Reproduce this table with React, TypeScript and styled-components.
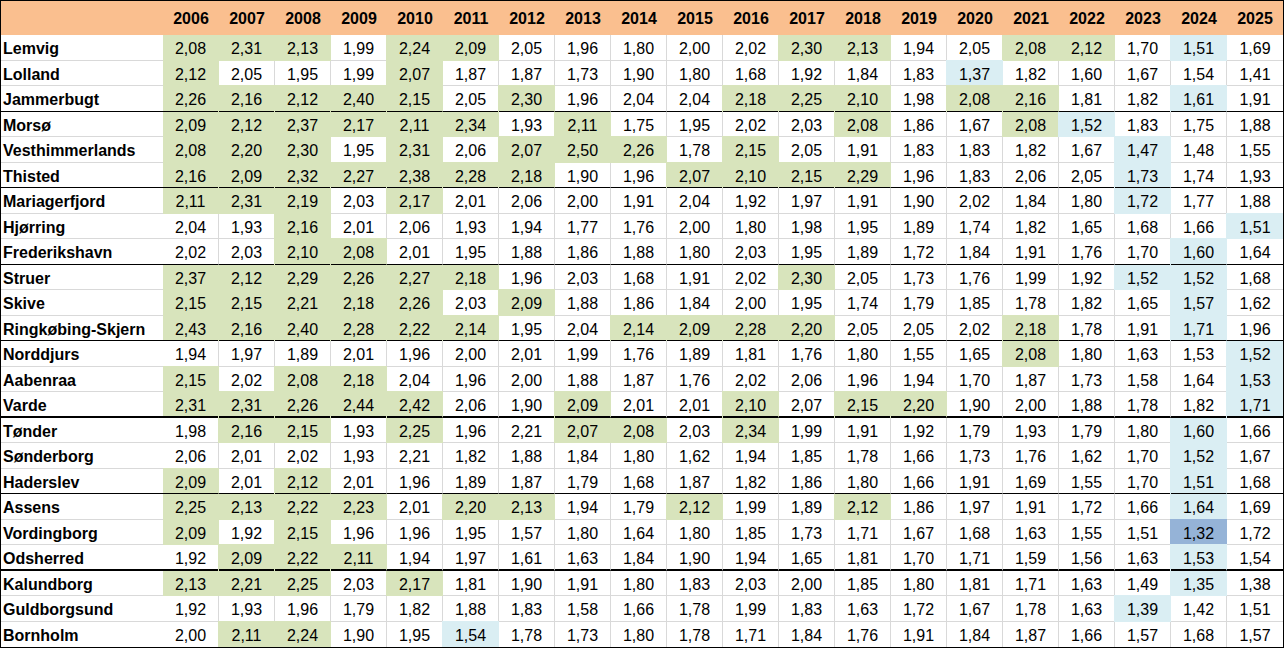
import React from "react";
import styled, { createGlobalStyle, css } from "styled-components";

const GRID = "#d9d9d9";
const FILLS: Record<string, string> = {
  G: "#d8e4bc",
  B: "#daeef3",
  D: "#95b3d7",
};

const GlobalStyle = createGlobalStyle`
  html, body {
    margin: 0;
    padding: 0;
    background: #ffffff;
  }
  body {
    font-family: "Liberation Sans", Arial, sans-serif;
    color: #000000;
  }
`;

const YEARS = Array.from({ length: 20 }, (_, i) => 2006 + i);

type Row = { name: string; values: string };

// groups of three rows separated by a black rule; number = rule thickness below group
const GROUPS: { sep: number; rows: Row[] }[] = [
  {
    sep: 1,
    rows: [
      { name: "Lemvig", values: "2,08G 2,31G 2,13G 1,99 2,24G 2,09G 2,05 1,96 1,80 2,00 2,02 2,30G 2,13G 1,94 2,05 2,08G 2,12G 1,70 1,51B 1,69" },
      { name: "Lolland", values: "2,12G 2,05 1,95 1,99 2,07G 1,87 1,87 1,73 1,90 1,80 1,68 1,92 1,84 1,83 1,37B 1,82 1,60 1,67 1,54 1,41" },
      { name: "Jammerbugt", values: "2,26G 2,16G 2,12G 2,40G 2,15G 2,05 2,30G 1,96 2,04 2,04 2,18G 2,25G 2,10G 1,98 2,08G 2,16G 1,81 1,82 1,61B 1,91" },
    ],
  },
  {
    sep: 1,
    rows: [
      { name: "Morsø", values: "2,09G 2,12G 2,37G 2,17G 2,11G 2,34G 1,93 2,11G 1,75 1,95 2,02 2,03 2,08G 1,86 1,67 2,08G 1,52B 1,83 1,75 1,88" },
      { name: "Vesthimmerlands", values: "2,08G 2,20G 2,30G 1,95 2,31G 2,06 2,07G 2,50G 2,26G 1,78 2,15G 2,05 1,91 1,83 1,83 1,82 1,67 1,47B 1,48 1,55" },
      { name: "Thisted", values: "2,16G 2,09G 2,32G 2,27G 2,38G 2,28G 2,18G 1,90 1,96 2,07G 2,10G 2,15G 2,29G 1,96 1,83 2,06 2,05 1,73B 1,74 1,93" },
    ],
  },
  {
    sep: 1,
    rows: [
      { name: "Mariagerfjord", values: "2,11G 2,31G 2,19G 2,03 2,17G 2,01 2,06 2,00 1,91 2,04 1,92 1,97 1,91 1,90 2,02 1,84 1,80 1,72B 1,77 1,88" },
      { name: "Hjørring", values: "2,04 1,93 2,16G 2,01 2,06 1,93 1,94 1,77 1,76 2,00 1,80 1,98 1,95 1,89 1,74 1,82 1,65 1,68 1,66 1,51B" },
      { name: "Frederikshavn", values: "2,02 2,03 2,10G 2,08G 2,01 1,95 1,88 1,86 1,88 1,80 2,03 1,95 1,89 1,72 1,84 1,91 1,76 1,70 1,60B 1,64" },
    ],
  },
  {
    sep: 1,
    rows: [
      { name: "Struer", values: "2,37G 2,12G 2,29G 2,26G 2,27G 2,18G 1,96 2,03 1,68 1,91 2,02 2,30G 2,05 1,73 1,76 1,99 1,92 1,52B 1,52B 1,68" },
      { name: "Skive", values: "2,15G 2,15G 2,21G 2,18G 2,26G 2,03 2,09G 1,88 1,86 1,84 2,00 1,95 1,74 1,79 1,85 1,78 1,82 1,65 1,57B 1,62" },
      { name: "Ringkøbing-Skjern", values: "2,43G 2,16G 2,40G 2,28G 2,22G 2,14G 1,95 2,04 2,14G 2,09G 2,28G 2,20G 2,05 2,05 2,02 2,18G 1,78 1,91 1,71B 1,96" },
    ],
  },
  {
    sep: 2,
    rows: [
      { name: "Norddjurs", values: "1,94 1,97 1,89 2,01 1,96 2,00 2,01 1,99 1,76 1,89 1,81 1,76 1,80 1,55 1,65 2,08G 1,80 1,63 1,53 1,52B" },
      { name: "Aabenraa", values: "2,15G 2,02 2,08G 2,18G 2,04 1,96 2,00 1,88 1,87 1,76 2,02 2,06 1,96 1,94 1,70 1,87 1,73 1,58 1,64 1,53B" },
      { name: "Varde", values: "2,31G 2,31G 2,26G 2,44G 2,42G 2,06 1,90 2,09G 2,01 2,01 2,10G 2,07 2,15G 2,20G 1,90 2,00 1,88 1,78 1,82 1,71B" },
    ],
  },
  {
    sep: 1,
    rows: [
      { name: "Tønder", values: "1,98 2,16G 2,15G 1,93 2,25G 1,96 2,21 2,07G 2,08G 2,03 2,34G 1,99 1,91 1,92 1,79 1,93 1,79 1,80 1,60B 1,66" },
      { name: "Sønderborg", values: "2,06 2,01 2,02 1,93 2,21 1,82 1,88 1,84 1,80 1,62 1,94 1,85 1,78 1,66 1,73 1,76 1,62 1,70 1,52B 1,67" },
      { name: "Haderslev", values: "2,09G 2,01 2,12G 2,01 1,96 1,89 1,87 1,79 1,68 1,87 1,82 1,86 1,80 1,66 1,91 1,69 1,55 1,70 1,51B 1,68" },
    ],
  },
  {
    sep: 2,
    rows: [
      { name: "Assens", values: "2,25G 2,13G 2,22G 2,23G 2,01 2,20G 2,13G 1,94 1,79 2,12G 1,99 1,89 2,12G 1,86 1,97 1,91 1,72 1,66 1,64B 1,69" },
      { name: "Vordingborg", values: "2,09G 1,92 2,15G 1,96 1,96 1,95 1,57 1,80 1,64 1,80 1,85 1,73 1,71 1,67 1,68 1,63 1,55 1,51 1,32D 1,72" },
      { name: "Odsherred", values: "1,92 2,09G 2,22G 2,11G 1,94 1,97 1,61 1,63 1,84 1,90 1,94 1,65 1,81 1,70 1,71 1,59 1,56 1,63 1,53B 1,54" },
    ],
  },
  {
    sep: 0,
    rows: [
      { name: "Kalundborg", values: "2,13G 2,21G 2,25G 2,03 2,17G 1,81 1,90 1,91 1,80 1,83 2,03 2,00 1,85 1,80 1,81 1,71 1,63 1,49 1,35B 1,38" },
      { name: "Guldborgsund", values: "1,92 1,93 1,96 1,79 1,82 1,88 1,83 1,58 1,66 1,78 1,99 1,83 1,63 1,72 1,67 1,78 1,63 1,39B 1,42 1,51" },
      { name: "Bornholm", values: "2,00 2,11G 2,24G 1,90 1,95 1,54B 1,78 1,73 1,80 1,78 1,71 1,84 1,76 1,91 1,84 1,87 1,66 1,57 1,68 1,57" },
    ],
  },
];

const Sheet = styled.div`
  display: grid;
  grid-template-columns: 162px repeat(20, 56px);
  grid-template-rows: 34px repeat(24, 25.5px);
  width: max-content;
  border: 1px solid #000000;
  background: #ffffff;
  font-size: 16px;
`;

const HeaderCell = styled.div`
  display: flex;
  align-items: center;
  justify-content: center;
  padding-top: 1px;
  background: #fabf8f;
  font-weight: 700;
`;

type CellProps = {
  $fill?: string;
  $bottom: string; // "grid" | "none" | thickness of black rule
  $last: boolean;
  $shadowLeft: boolean;
  $shadowTop: boolean;
};

const bottomBorder = (b: string, fill?: string) => {
  if (b === "none") return "none";
  if (b === "grid") return `1px solid ${fill ?? GRID}`;
  return `${b}px solid #000000`;
};

const ValueCell = styled.div<CellProps>`
  display: flex;
  align-items: center;
  justify-content: center;
  box-sizing: border-box;
  padding-top: 4px;
  background: ${(p) => p.$fill ?? "#ffffff"};
  border-right: ${(p) => (p.$last ? "none" : `1px solid ${p.$fill ?? GRID}`)};
  border-bottom: ${(p) => bottomBorder(p.$bottom, p.$fill)};
  ${(p) => {
    if (!p.$fill) return "";
    const shadows: string[] = [];
    if (p.$shadowLeft) shadows.push(`-1px 0 0 ${p.$fill}`);
    if (p.$shadowTop) shadows.push(`0 -1px 0 ${p.$fill}`);
    if (p.$shadowLeft && p.$shadowTop) shadows.push(`-1px -1px 0 ${p.$fill}`);
    return shadows.length ? css`box-shadow: ${shadows.join(", ")};` : "";
  }}
`;

const NameCell = styled.div<{ $bottom: string }>`
  display: flex;
  align-items: center;
  box-sizing: border-box;
  padding: 4px 0 0 2px;
  font-weight: 700;
  white-space: nowrap;
  border-bottom: ${(p) => bottomBorder(p.$bottom)};
`;

export default function App() {
  const rows: React.ReactNode[] = [];
  GROUPS.forEach((group, gi) => {
    group.rows.forEach((row, ri) => {
      const isGroupEnd = ri === group.rows.length - 1;
      const isLastRow = gi === GROUPS.length - 1 && isGroupEnd;
      const bottom = isLastRow ? "none" : isGroupEnd ? String(group.sep) : "grid";
      const topIsGrid = ri > 0;
      rows.push(
        <NameCell key={`${row.name}-n`} $bottom={bottom}>
          {row.name}
        </NameCell>
      );
      row.values.split(" ").forEach((token, ci) => {
        const code = /[GBD]$/.test(token) ? token.slice(-1) : "";
        const value = code ? token.slice(0, -1) : token;
        rows.push(
          <ValueCell
            key={`${row.name}-${ci}`}
            $fill={code ? FILLS[code] : undefined}
            $bottom={bottom}
            $last={ci === YEARS.length - 1}
            $shadowLeft={ci > 0}
            $shadowTop={topIsGrid}
          >
            {value}
          </ValueCell>
        );
      });
    });
  });

  return (
    <>
      <GlobalStyle />
      <Sheet>
        <HeaderCell />
        {YEARS.map((y) => (
          <HeaderCell key={y}>{y}</HeaderCell>
        ))}
        {rows}
      </Sheet>
    </>
  );
}
